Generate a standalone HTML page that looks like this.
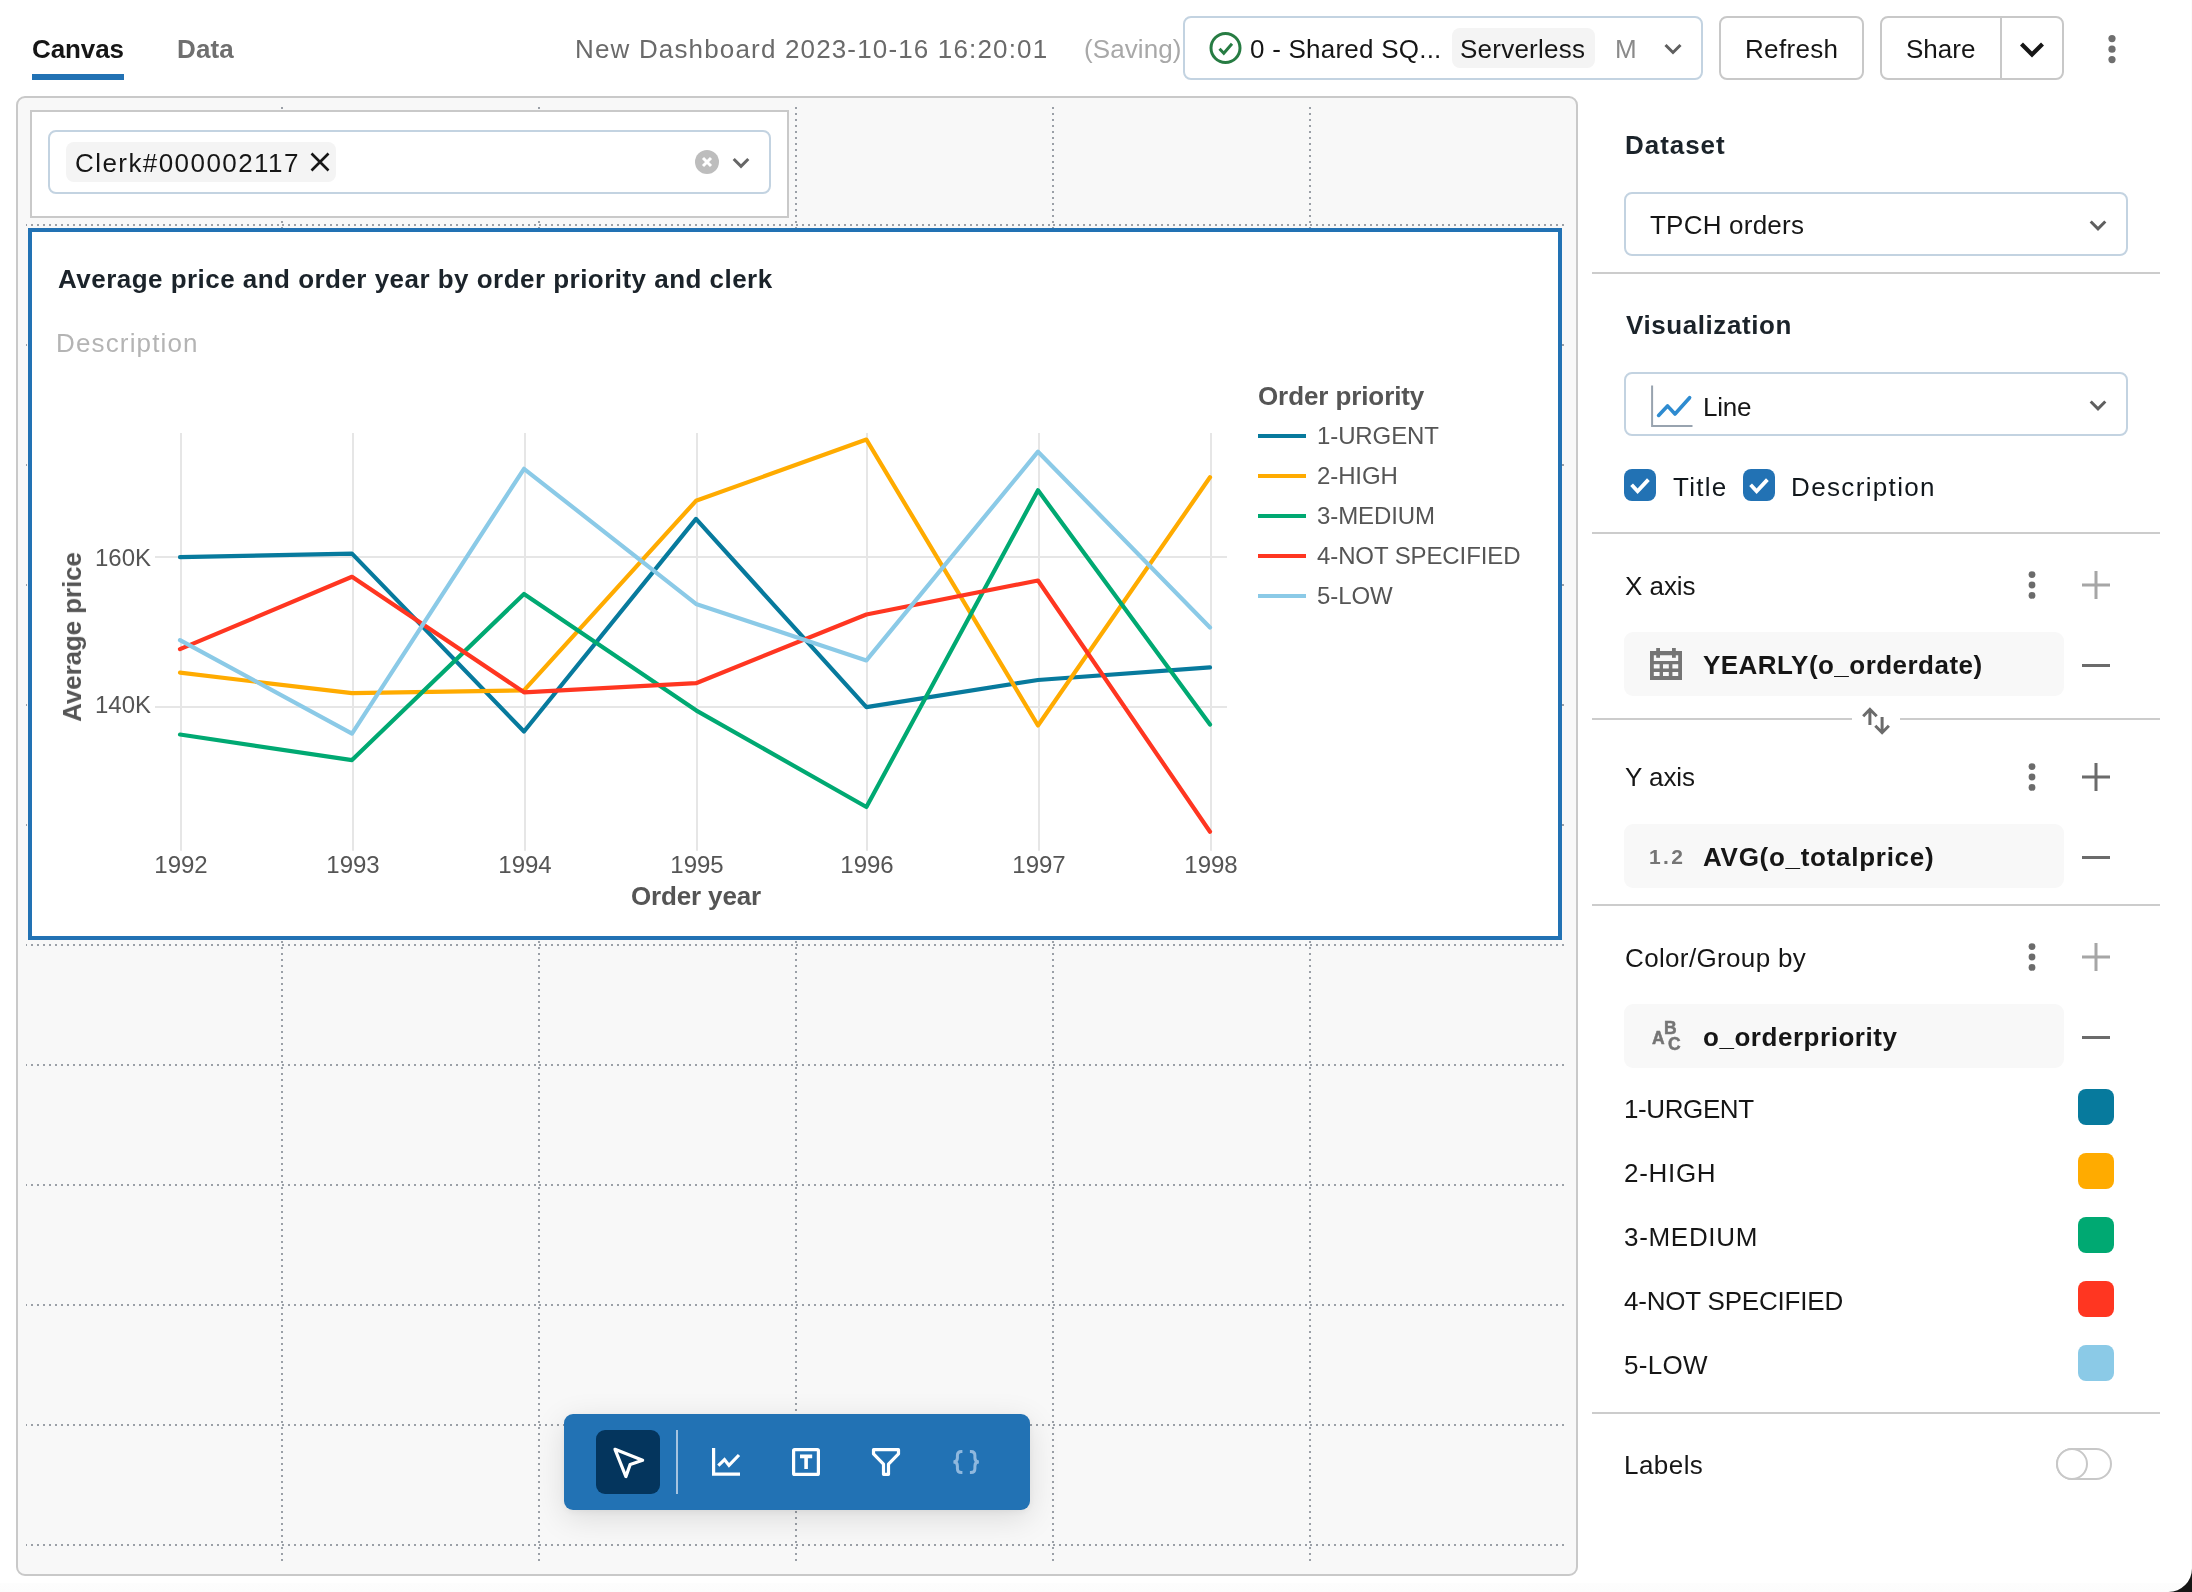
<!DOCTYPE html>
<html><head><meta charset="utf-8"><title>Dashboard</title>
<style>
html,body{margin:0;padding:0;}
body{width:2192px;height:1592px;position:relative;overflow:hidden;background:#fff;font-family:"Liberation Sans",sans-serif;}
.t{position:absolute;line-height:1;white-space:pre;will-change:transform;}
.b{position:absolute;box-sizing:border-box;}
svg{position:absolute;overflow:visible;}
</style></head><body>
<span class="t" style="left:32.0px;top:36.2px;font-size:26px;font-weight:700;color:#161616;letter-spacing:-0.10px;">Canvas</span>
<div class="b" style="left:32px;top:74px;width:92px;height:6px;background:#2272b4"></div>
<span class="t" style="left:177.0px;top:36.2px;font-size:26px;font-weight:700;color:#6f6f6f;letter-spacing:0.10px;">Data</span>
<span class="t" style="left:574.5px;top:36.2px;font-size:26px;font-weight:400;color:#6a6a6a;letter-spacing:1.16px;">New Dashboard 2023-10-16 16:20:01</span>
<span class="t" style="left:1084.0px;top:36.2px;font-size:26px;font-weight:400;color:#a8a8a8;letter-spacing:0.08px;">(Saving)</span>
<div class="b" style="left:1183px;top:16px;width:520px;height:64px;border:2px solid #c3d3e1;border-radius:8px;background:#fff"></div>
<svg style="left:1206.5px;top:30px" width="36" height="36" viewBox="0 0 36 36"><circle cx="18.5" cy="18" r="14.5" fill="none" stroke="#277c43" stroke-width="3"/><path d="M12.5 18.7 L16.8 23.2 L25 13.8" fill="none" stroke="#277c43" stroke-width="3" stroke-linejoin="miter"/></svg>
<span class="t" style="left:1250.3px;top:36.2px;font-size:26px;font-weight:400;color:#161616;letter-spacing:0.23px;">0 - Shared SQ...</span>
<div class="b" style="left:1452px;top:28px;width:143px;height:40px;border-radius:8px;background:#f4f4f4"></div>
<span class="t" style="left:1460.0px;top:36.2px;font-size:26px;font-weight:400;color:#161616;letter-spacing:0.24px;">Serverless</span>
<span class="t" style="left:1614.5px;top:36.2px;font-size:26px;font-weight:400;color:#8a8a8a;">M</span>
<svg style="left:1662px;top:40px" width="22" height="18" viewBox="0 0 22 18"><path d="M3.5 5 L11 12.5 L18.5 5" fill="none" stroke="#5f5f5f" stroke-width="3"/></svg>
<div class="b" style="left:1719px;top:16px;width:145px;height:64px;border:2px solid #c8c8c8;border-radius:8px;background:#fff"></div>
<span class="t" style="left:1745.0px;top:36.2px;font-size:26px;font-weight:400;color:#161616;letter-spacing:0.33px;">Refresh</span>
<div class="b" style="left:1880px;top:16px;width:184px;height:64px;border:2px solid #c8c8c8;border-radius:8px;background:#fff"></div>
<div class="b" style="left:2000px;top:16px;width:2px;height:64px;background:#c8c8c8"></div>
<span class="t" style="left:1906.0px;top:36.2px;font-size:26px;font-weight:400;color:#161616;">Share</span>
<svg style="left:2016px;top:38px" width="32" height="24" viewBox="0 0 32 24"><path d="M5.5 6 L16 16.5 L26.5 6" fill="none" stroke="#161616" stroke-width="4.2"/></svg>
<svg style="left:2104px;top:32px" width="16" height="34" viewBox="0 0 16 34"><circle cx="8" cy="6.6" r="3.6" fill="#6f6f6f"/><circle cx="8" cy="17.2" r="3.6" fill="#6f6f6f"/><circle cx="8" cy="27.6" r="3.6" fill="#6f6f6f"/></svg>
<div class="b" style="left:16px;top:96px;width:1562px;height:1480px;border:2px solid #c9c9c9;border-radius:9px;background:#f8f8f8"></div>
<svg style="left:0;top:0" width="2192" height="1592" viewBox="0 0 2192 1592"><defs><clipPath id="gc"><rect x="26" y="100" width="1539" height="1470"/></clipPath></defs><g clip-path="url(#gc)" stroke="#9ba0a7" stroke-width="2" stroke-dasharray="2 4" fill="none"><path d="M25 225 H282"/><path d="M282 225 H539"/><path d="M539 225 H796"/><path d="M796 225 H1053"/><path d="M1053 225 H1310"/><path d="M1310 225 H1567"/><path d="M25 345 H282"/><path d="M282 345 H539"/><path d="M539 345 H796"/><path d="M796 345 H1053"/><path d="M1053 345 H1310"/><path d="M1310 345 H1567"/><path d="M25 465 H282"/><path d="M282 465 H539"/><path d="M539 465 H796"/><path d="M796 465 H1053"/><path d="M1053 465 H1310"/><path d="M1310 465 H1567"/><path d="M25 585 H282"/><path d="M282 585 H539"/><path d="M539 585 H796"/><path d="M796 585 H1053"/><path d="M1053 585 H1310"/><path d="M1310 585 H1567"/><path d="M25 705 H282"/><path d="M282 705 H539"/><path d="M539 705 H796"/><path d="M796 705 H1053"/><path d="M1053 705 H1310"/><path d="M1310 705 H1567"/><path d="M25 825 H282"/><path d="M282 825 H539"/><path d="M539 825 H796"/><path d="M796 825 H1053"/><path d="M1053 825 H1310"/><path d="M1310 825 H1567"/><path d="M25 945 H282"/><path d="M282 945 H539"/><path d="M539 945 H796"/><path d="M796 945 H1053"/><path d="M1053 945 H1310"/><path d="M1310 945 H1567"/><path d="M25 1065 H282"/><path d="M282 1065 H539"/><path d="M539 1065 H796"/><path d="M796 1065 H1053"/><path d="M1053 1065 H1310"/><path d="M1310 1065 H1567"/><path d="M25 1185 H282"/><path d="M282 1185 H539"/><path d="M539 1185 H796"/><path d="M796 1185 H1053"/><path d="M1053 1185 H1310"/><path d="M1310 1185 H1567"/><path d="M25 1305 H282"/><path d="M282 1305 H539"/><path d="M539 1305 H796"/><path d="M796 1305 H1053"/><path d="M1053 1305 H1310"/><path d="M1310 1305 H1567"/><path d="M25 1425 H282"/><path d="M282 1425 H539"/><path d="M539 1425 H796"/><path d="M796 1425 H1053"/><path d="M1053 1425 H1310"/><path d="M1310 1425 H1567"/><path d="M25 1545 H282"/><path d="M282 1545 H539"/><path d="M539 1545 H796"/><path d="M796 1545 H1053"/><path d="M1053 1545 H1310"/><path d="M1310 1545 H1567"/><path d="M282 107 V1562"/><path d="M539 107 V1562"/><path d="M796 107 V1562"/><path d="M1053 107 V1562"/><path d="M1310 107 V1562"/></g></svg>
<div class="b" style="left:30px;top:110px;width:759px;height:108px;border:2px solid #c9c9c9;background:#fff"></div>
<div class="b" style="left:48px;top:130px;width:723px;height:64px;border:2px solid #c3d3e1;border-radius:8px;background:#fff"></div>
<div class="b" style="left:66px;top:142px;width:270px;height:40px;border-radius:8px;background:#f4f4f4"></div>
<span class="t" style="left:74.5px;top:149.8px;font-size:26px;font-weight:400;color:#161616;letter-spacing:1.43px;">Clerk#000002117</span>
<svg style="left:308px;top:150px" width="24" height="24" viewBox="0 0 24 24"><path d="M3.5 3.5 L20.5 20.5 M20.5 3.5 L3.5 20.5" fill="none" stroke="#161616" stroke-width="2.6"/></svg>
<svg style="left:695px;top:150px" width="24" height="24" viewBox="0 0 24 24"><circle cx="12" cy="12" r="12" fill="#bdbdbd"/><path d="M8 8 L16 16 M16 8 L8 16" stroke="#fff" stroke-width="3" fill="none"/></svg>
<svg style="left:730px;top:153px" width="22" height="18" viewBox="0 0 22 18"><path d="M3.7 6 L11 13.3 L18.3 6" fill="none" stroke="#666" stroke-width="3"/></svg>
<div class="b" style="left:28px;top:228px;width:1534px;height:712px;border:4px solid #2272b4;background:#fff"></div>
<span class="t" style="left:58.0px;top:266.2px;font-size:26px;font-weight:700;color:#1b232a;letter-spacing:0.47px;">Average price and order year by order priority and clerk</span>
<span class="t" style="left:56.4px;top:330.1px;font-size:26px;font-weight:400;color:#b4b4b4;letter-spacing:1.15px;">Description</span>
<svg style="left:0;top:0" width="2192" height="1592" viewBox="0 0 2192 1592"><g stroke="#e6e6e6" stroke-width="2" fill="none"><path d="M181 433 V850.8"/><path d="M353 433 V850.8"/><path d="M525 433 V850.8"/><path d="M697 433 V850.8"/><path d="M867 433 V850.8"/><path d="M1039 433 V850.8"/><path d="M1211 433 V850.8"/><path d="M155 557 H1227"/><path d="M155 707 H1227"/></g><g fill="none" stroke-width="4.2" stroke-linejoin="round" stroke-linecap="round"><path d="M180 557.2 L352 553.6 L524 731.5 L696 518.9 L866.4 707.1 L1038 680.0 L1210 667.3" stroke="#077a9d"/><path d="M180 672.7 L352 693.2 L524 690.4 L696 500.8 L866.4 439.6 L1038 725.5 L1210 477.3" stroke="#ffab00"/><path d="M180 734.5 L352 760.1 L524 594.0 L696 710.3 L866.4 807.0 L1038 490.3 L1210 724.6" stroke="#00a972"/><path d="M180 649.1 L352 576.8 L524 692.3 L696 683.2 L866.4 614.5 L1038 580.5 L1210 831.7" stroke="#ff3621"/><path d="M180 640.1 L352 733.6 L524 468.8 L696 603.9 L866.4 660.4 L1038 451.7 L1210 627.5" stroke="#8bcae7"/></g><path d="M1258 436 H1306" stroke="#077a9d" stroke-width="4" fill="none"/><path d="M1258 476 H1306" stroke="#ffab00" stroke-width="4" fill="none"/><path d="M1258 516 H1306" stroke="#00a972" stroke-width="4" fill="none"/><path d="M1258 556 H1306" stroke="#ff3621" stroke-width="4" fill="none"/><path d="M1258 596 H1306" stroke="#8bcae7" stroke-width="4" fill="none"/></svg>
<span class="t" style="left:151.2px;top:545.6px;font-size:24px;font-weight:400;color:#555555;transform:translateX(-100%);">160K</span>
<span class="t" style="left:151.2px;top:693.4px;font-size:24px;font-weight:400;color:#555555;transform:translateX(-100%);">140K</span>
<span class="t" style="left:180.5px;top:853.0px;font-size:24px;font-weight:400;color:#555555;transform:translateX(-50%);">1992</span>
<span class="t" style="left:352.5px;top:853.0px;font-size:24px;font-weight:400;color:#555555;transform:translateX(-50%);">1993</span>
<span class="t" style="left:524.5px;top:853.0px;font-size:24px;font-weight:400;color:#555555;transform:translateX(-50%);">1994</span>
<span class="t" style="left:696.5px;top:853.0px;font-size:24px;font-weight:400;color:#555555;transform:translateX(-50%);">1995</span>
<span class="t" style="left:866.5px;top:853.0px;font-size:24px;font-weight:400;color:#555555;transform:translateX(-50%);">1996</span>
<span class="t" style="left:1038.5px;top:853.0px;font-size:24px;font-weight:400;color:#555555;transform:translateX(-50%);">1997</span>
<span class="t" style="left:1210.5px;top:853.0px;font-size:24px;font-weight:400;color:#555555;transform:translateX(-50%);">1998</span>
<span class="t" style="left:696.0px;top:882.8px;font-size:26px;font-weight:700;color:#555555;letter-spacing:-0.15px;transform:translateX(-50%);">Order year</span>
<span class="t" style="left:81px;top:636.8px;font-size:26px;font-weight:700;color:#555555;letter-spacing:-0.1px;transform-origin:0 0;transform:rotate(-90deg) translate(-50%,-22.0px)">Average price</span>
<span class="t" style="left:1258.0px;top:383.3px;font-size:26px;font-weight:700;color:#555555;letter-spacing:-0.10px;">Order priority</span>
<span class="t" style="left:1317.0px;top:423.5px;font-size:24px;font-weight:400;color:#555555;letter-spacing:-0.10px;">1-URGENT</span>
<span class="t" style="left:1317.0px;top:463.5px;font-size:24px;font-weight:400;color:#555555;letter-spacing:-0.10px;">2-HIGH</span>
<span class="t" style="left:1317.0px;top:503.5px;font-size:24px;font-weight:400;color:#555555;letter-spacing:-0.10px;">3-MEDIUM</span>
<span class="t" style="left:1317.0px;top:543.5px;font-size:24px;font-weight:400;color:#555555;letter-spacing:-0.10px;">4-NOT SPECIFIED</span>
<span class="t" style="left:1317.0px;top:583.5px;font-size:24px;font-weight:400;color:#555555;letter-spacing:-0.10px;">5-LOW</span>
<div class="b" style="left:564px;top:1414px;width:466px;height:96px;border-radius:9px;background:#2272b4;box-shadow:0 8px 32px rgba(0,0,0,0.12),0 2px 8px rgba(0,0,0,0.05)"></div>
<div class="b" style="left:596px;top:1430px;width:64px;height:64px;border-radius:9px;background:#04355d"></div>
<div class="b" style="left:676px;top:1430px;width:2px;height:64px;background:#a6c4e0"></div>
<svg style="left:0;top:0" width="2192" height="1592" viewBox="0 0 2192 1592"><g fill="none" stroke="#fff" stroke-width="3.2"><path d="M615 1449.3 L642.6 1460.3 L630.2 1464.4 L625.9 1476.6 Z" stroke-linejoin="round"/><path d="M713.6 1448 V1474.2 H740"/><path d="M718.3 1465.6 L724.5 1459.6 L729 1465.4 L739 1455"/><rect x="793.6" y="1449.6" width="24.8" height="24.8" rx="1"/><path d="M800 1456.4 H812.2 M806.1 1456.4 V1469" stroke-width="3.6"/><path d="M873.5 1449.7 H898.5 V1453.9 L888.5 1464.2 V1474.3 H883.5 V1464.2 L873.5 1453.9 Z" stroke-linejoin="round"/></g><g fill="none" stroke="#8fb8de" stroke-width="3"><path d="M962.4 1451.6 h-1 q-4 0 -4 4 v2.5 q0 3.9 -4 3.9 q4 0 4 3.9 v2.5 q0 4 4 4 h1"/><path d="M969.9 1451.6 h1 q4 0 4 4 v2.5 q0 3.9 4 3.9 q-4 0 -4 3.9 v2.5 q0 4 -4 4 h-1"/></g></svg>
<span class="t" style="left:1624.5px;top:132.2px;font-size:26px;font-weight:700;color:#1b232a;letter-spacing:0.95px;">Dataset</span>
<div class="b" style="left:1624px;top:192px;width:504px;height:64px;border:2px solid #c3d3e1;border-radius:8px;background:#fff"></div>
<span class="t" style="left:1650.0px;top:212.2px;font-size:26px;font-weight:400;color:#161616;letter-spacing:0.22px;">TPCH orders</span>
<svg style="left:2087px;top:216px" width="22" height="18" viewBox="0 0 22 18"><path d="M3.7 5.5 L11 12.8 L18.3 5.5" fill="none" stroke="#5f5f5f" stroke-width="3"/></svg>
<div class="b" style="left:1592px;top:272px;width:568px;height:2px;background:#cccccc"></div>
<span class="t" style="left:1625.5px;top:311.5px;font-size:26px;font-weight:700;color:#1b232a;letter-spacing:0.57px;">Visualization</span>
<div class="b" style="left:1624px;top:372px;width:504px;height:64px;border:2px solid #c3d3e1;border-radius:8px;background:#fff"></div>
<svg style="left:0;top:0" width="2192" height="1592" viewBox="0 0 2192 1592"><path d="M1652.1 385.4 V426 H1692.5" fill="none" stroke="#98a3af" stroke-width="2"/><path d="M1658.6 415.4 L1667.5 405.9 L1675 414 L1689.6 397.7" fill="none" stroke="#2e8bd0" stroke-width="3.6" stroke-linecap="round" stroke-linejoin="round"/></svg>
<span class="t" style="left:1703.0px;top:393.8px;font-size:26px;font-weight:400;color:#161616;letter-spacing:-0.25px;">Line</span>
<svg style="left:2087px;top:396px" width="22" height="18" viewBox="0 0 22 18"><path d="M3.7 5.5 L11 12.8 L18.3 5.5" fill="none" stroke="#5f5f5f" stroke-width="3"/></svg>
<svg style="left:1624px;top:469px" width="32" height="32" viewBox="0 0 32 32"><rect width="32" height="32" rx="8" fill="#2272b4"/><path d="M7.6 15.8 L13.6 22.3 L24.4 10.6" fill="none" stroke="#fff" stroke-width="3.8"/></svg>
<span class="t" style="left:1673.0px;top:473.9px;font-size:26px;font-weight:400;color:#11171c;letter-spacing:1.25px;">Title</span>
<svg style="left:1743px;top:469px" width="32" height="32" viewBox="0 0 32 32"><rect width="32" height="32" rx="8" fill="#2272b4"/><path d="M7.6 15.8 L13.6 22.3 L24.4 10.6" fill="none" stroke="#fff" stroke-width="3.8"/></svg>
<span class="t" style="left:1790.5px;top:473.9px;font-size:26px;font-weight:400;color:#11171c;letter-spacing:1.35px;">Description</span>
<div class="b" style="left:1592px;top:532px;width:568px;height:2px;background:#cccccc"></div>
<span class="t" style="left:1625.0px;top:572.5px;font-size:26px;font-weight:400;color:#161616;letter-spacing:-0.05px;">X axis</span>
<svg style="left:2024px;top:568px" width="16" height="34" viewBox="0 0 16 34"><circle cx="8" cy="6.6" r="3.4" fill="#6b6b6b"/><circle cx="8" cy="17" r="3.4" fill="#6b6b6b"/><circle cx="8" cy="27.4" r="3.4" fill="#6b6b6b"/></svg>
<svg style="left:2082px;top:571px" width="28" height="28" viewBox="0 0 28 28"><path d="M14 0 V28 M0 14 H28" stroke="#a6a6a6" stroke-width="3" fill="none"/></svg>
<div class="b" style="left:1624px;top:632px;width:440px;height:64px;border-radius:9px;background:#f8f8f8"></div>
<svg style="left:1650px;top:648px" width="32" height="32" viewBox="0 0 32 32"><g fill="#757575"><path fill-rule="evenodd" d="M0 3 H32 V32 H0 Z M3.8 7.2 H28.2 V12.9 H3.8 Z M3.8 16.2 H9.6 V20.4 H3.8 Z M13 16.2 H18.8 V20.4 H13 Z M22.4 16.2 H28.2 V20.4 H22.4 Z M3.8 24.1 H9.6 V28.1 H3.8 Z M13 24.1 H18.8 V28.1 H13 Z M22.4 24.1 H28.2 V28.1 H22.4 Z"/><rect x="6.2" y="0" width="3.8" height="9.8"/><rect x="22" y="0" width="3.8" height="9.8"/></g></svg>
<span class="t" style="left:1703.0px;top:652.0px;font-size:26px;font-weight:700;color:#161616;letter-spacing:0.47px;">YEARLY(o_orderdate)</span>
<div class="b" style="left:2082px;top:663.5px;width:28px;height:3px;background:#6b6b6b"></div>
<div class="b" style="left:1592px;top:718px;width:260px;height:2px;background:#cccccc"></div>
<div class="b" style="left:1900px;top:718px;width:260px;height:2px;background:#cccccc"></div>
<svg style="left:0;top:0" width="2192" height="1592" viewBox="0 0 2192 1592"><g fill="none" stroke="#6b6b6b" stroke-width="3"><path d="M1869.9 725 V709.5 M1863.2 716.2 L1869.9 709.3 L1876.7 716.2"/><path d="M1882.1 717 V732.6 M1875.3 725.8 L1882.1 732.7 L1888.9 725.8"/></g></svg>
<span class="t" style="left:1625.0px;top:764.4px;font-size:26px;font-weight:400;color:#161616;letter-spacing:-0.05px;">Y axis</span>
<svg style="left:2024px;top:760px" width="16" height="34" viewBox="0 0 16 34"><circle cx="8" cy="6.6" r="3.4" fill="#6b6b6b"/><circle cx="8" cy="17" r="3.4" fill="#6b6b6b"/><circle cx="8" cy="27.4" r="3.4" fill="#6b6b6b"/></svg>
<svg style="left:2082px;top:763px" width="28" height="28" viewBox="0 0 28 28"><path d="M14 0 V28 M0 14 H28" stroke="#6b6b6b" stroke-width="3" fill="none"/></svg>
<div class="b" style="left:1624px;top:824px;width:440px;height:64px;border-radius:9px;background:#f8f8f8"></div>
<span class="t" style="left:1648.5px;top:845.8px;font-size:21px;font-weight:700;color:#757575;letter-spacing:2.40px;">1.2</span>
<span class="t" style="left:1703.0px;top:844.0px;font-size:26px;font-weight:700;color:#161616;letter-spacing:0.72px;">AVG(o_totalprice)</span>
<div class="b" style="left:2082px;top:855.5px;width:28px;height:3px;background:#6b6b6b"></div>
<div class="b" style="left:1592px;top:904px;width:568px;height:2px;background:#cccccc"></div>
<span class="t" style="left:1625.0px;top:944.8px;font-size:26px;font-weight:400;color:#161616;letter-spacing:0.35px;">Color/Group by</span>
<svg style="left:2024px;top:940px" width="16" height="34" viewBox="0 0 16 34"><circle cx="8" cy="6.6" r="3.4" fill="#6b6b6b"/><circle cx="8" cy="17" r="3.4" fill="#6b6b6b"/><circle cx="8" cy="27.4" r="3.4" fill="#6b6b6b"/></svg>
<svg style="left:2082px;top:943px" width="28" height="28" viewBox="0 0 28 28"><path d="M14 0 V28 M0 14 H28" stroke="#a6a6a6" stroke-width="3" fill="none"/></svg>
<div class="b" style="left:1624px;top:1004px;width:440px;height:64px;border-radius:9px;background:#f8f8f8"></div>
<span class="t" style="left:1651.8px;top:1029.8px;font-size:17.5px;font-weight:700;color:#757575;-webkit-text-stroke:0.5px #757575;">A</span>
<span class="t" style="left:1663.6px;top:1019.8px;font-size:17.5px;font-weight:700;color:#757575;-webkit-text-stroke:0.5px #757575;">B</span>
<span class="t" style="left:1668.4px;top:1036.0px;font-size:17.5px;font-weight:700;color:#757575;-webkit-text-stroke:0.5px #757575;">C</span>
<span class="t" style="left:1703.0px;top:1024.2px;font-size:26px;font-weight:700;color:#161616;letter-spacing:0.54px;">o_orderpriority</span>
<div class="b" style="left:2082px;top:1035.5px;width:28px;height:3px;background:#6b6b6b"></div>
<span class="t" style="left:1623.5px;top:1096.0px;font-size:26px;font-weight:400;color:#161616;letter-spacing:-0.40px;">1-URGENT</span>
<div class="b" style="left:2078px;top:1089px;width:36px;height:36px;border-radius:8px;background:#077a9d"></div>
<span class="t" style="left:1623.5px;top:1160.0px;font-size:26px;font-weight:400;color:#161616;letter-spacing:0.70px;">2-HIGH</span>
<div class="b" style="left:2078px;top:1153px;width:36px;height:36px;border-radius:8px;background:#ffab00"></div>
<span class="t" style="left:1623.5px;top:1224.0px;font-size:26px;font-weight:400;color:#161616;letter-spacing:0.69px;">3-MEDIUM</span>
<div class="b" style="left:2078px;top:1217px;width:36px;height:36px;border-radius:8px;background:#00a972"></div>
<span class="t" style="left:1623.5px;top:1288.0px;font-size:26px;font-weight:400;color:#161616;letter-spacing:-0.20px;">4-NOT SPECIFIED</span>
<div class="b" style="left:2078px;top:1281px;width:36px;height:36px;border-radius:8px;background:#ff3621"></div>
<span class="t" style="left:1623.5px;top:1352.0px;font-size:26px;font-weight:400;color:#161616;letter-spacing:0.33px;">5-LOW</span>
<div class="b" style="left:2078px;top:1345px;width:36px;height:36px;border-radius:8px;background:#8bcae7"></div>
<div class="b" style="left:1592px;top:1412px;width:568px;height:2px;background:#cccccc"></div>
<span class="t" style="left:1623.5px;top:1452.1px;font-size:26px;font-weight:400;color:#161616;letter-spacing:0.45px;">Labels</span>
<div class="b" style="left:2056px;top:1448px;width:56px;height:32px;border:2px solid #c8c8c8;border-radius:16px;background:#fff"></div>
<div class="b" style="left:2056px;top:1448px;width:32px;height:32px;border:2px solid #c8c8c8;border-radius:16px;background:#fff"></div>
<div class="b" style="left:0;top:1583px;width:2192px;height:9px;background:linear-gradient(to bottom,#fdfdfd,#fcfcfc)"></div>
<div class="b" style="left:2191px;top:0;width:1px;height:1592px;background:#fbfbfb"></div>
<svg style="left:2152px;top:1552px" width="40" height="40" viewBox="0 0 40 40"><path d="M40 16.5 A23.5 23.5 0 0 1 16.5 40 L40 40 Z" fill="#161616"/></svg>
</body></html>
